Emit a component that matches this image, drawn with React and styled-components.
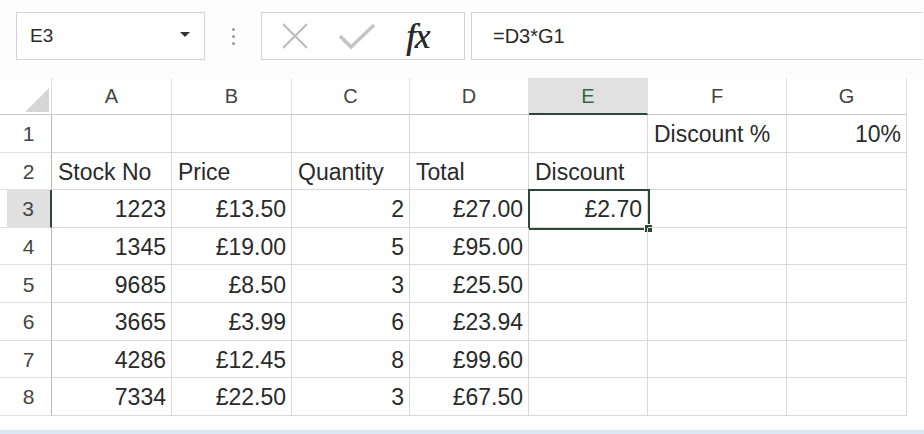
import { Fragment } from "react";
import styled, { createGlobalStyle } from "styled-components";

const GlobalStyle = createGlobalStyle`
  html, body {
    margin: 0;
    padding: 0;
    background: #ffffff;
  }
  body {
    font-family: "Liberation Sans", Arial, sans-serif;
    color: #2a2a2a;
  }
`;

const Page = styled.div`
  width: 924px;
  height: 434px;
  display: flex;
  flex-direction: column;
  background: #fff;
  overflow: hidden;
`;

const Toolbar = styled.div`
  height: 48px;
  padding: 12px 2px 18px 16px;
  display: flex;
  align-items: stretch;
  background: #fdfdfd;
`;

const NameBox = styled.div`
  width: 189px;
  box-sizing: border-box;
  border: 1px solid #d2d2d2;
  background: #fff;
  display: flex;
  align-items: center;
  justify-content: space-between;
  padding: 0 14px 0 13px;
  font-size: 19px;
  color: #2a2a2a;
`;

const Caret = styled.span`
  width: 0;
  height: 0;
  border-left: 5px solid transparent;
  border-right: 5px solid transparent;
  border-top: 5px solid #333;
  margin-top: -4px;
`;

const Grip = styled.div`
  width: 56px;
  display: flex;
  flex-direction: column;
  align-items: center;
  justify-content: center;
  gap: 4px;
  span {
    width: 3px;
    height: 3px;
    border-radius: 50%;
    background: #9a9a9a;
  }
`;

const ButtonGroup = styled.div`
  width: 204px;
  box-sizing: border-box;
  border: 1px solid #d2d2d2;
  background: #fff;
  display: flex;
  align-items: center;
  padding: 0 0 0 18px;
  gap: 28px;
`;

const Fx = styled.span`
  font-family: "Liberation Serif", "Times New Roman", serif;
  font-style: italic;
  font-size: 35px;
  color: #2a2a2a;
  letter-spacing: -1px;
  margin-left: 2px;
  line-height: 1;
  text-shadow: 0.4px 0 0 #2a2a2a;
`;

const FormulaBar = styled.div`
  flex: 1;
  margin-left: 6px;
  box-sizing: border-box;
  border: 1px solid #d2d2d2;
  border-right: none;
  background: #fff;
  display: flex;
  align-items: center;
  padding-left: 21px;
  font-size: 20px;
  color: #2a2a2a;
`;

const Sheet = styled.div`
  display: grid;
  grid-template-columns: 52px 120px 120px 118px 119px 119px 139px 120px 1fr;
  grid-template-rows: 37px repeat(8, 37.6px);
`;

const Corner = styled.div`
  position: relative;
  border-bottom: 1px solid #c9c9c9;
  border-right: 1px solid #dcdcdc;
  background: #fff;
  svg {
    position: absolute;
    right: 2px;
    bottom: 2px;
  }
`;

const ColHead = styled.div`
  display: flex;
  align-items: center;
  justify-content: center;
  font-size: 20px;
  color: ${(p) => (p.$active ? "#2f6a47" : "#444")};
  background: ${(p) => (p.$active ? "#e1e1e1" : "#fff")};
  border-right: 1px solid #e2e2e2;
  border-bottom: ${(p) => (p.$active ? "2px solid #2e4636" : "1px solid #c9c9c9")};
  box-sizing: border-box;
  padding-top: ${(p) => (p.$active ? "2px" : "0")};
`;

const RowHead = styled.div`
  display: flex;
  align-items: center;
  justify-content: center;
  padding: 2px 0 0 6px;
  font-size: 21px;
  color: #444;
  box-sizing: border-box;
  background: ${(p) => (p.$active ? "linear-gradient(to right, #fff 7px, #e0e0e0 7px)" : "#fff")};
  border-right: ${(p) => (p.$active ? "2px solid #2e4636" : "1px solid #b9b9b9")};
  border-bottom: 1px solid #e0e0e0;
`;

const Cell = styled.div`
  position: relative;
  display: flex;
  align-items: center;
  justify-content: ${(p) => (p.$right ? "flex-end" : "flex-start")};
  padding: 3px 5px 0 6px;
  font-size: 23px;
  color: #2a2a2a;
  white-space: nowrap;
  box-sizing: border-box;
  border-right: ${(p) => (p.$edge ? "none" : "1px solid #d9d9d9")};
  border-bottom: ${(p) => (p.$edge ? "none" : "1px solid #d9d9d9")};
`;

const Selection = styled.span`
  position: absolute;
  left: -1px;
  top: -1px;
  right: -3px;
  bottom: -3px;
  border: 2px solid #2e4636;
  pointer-events: none;
`;

const Handle = styled.span`
  position: absolute;
  right: -5px;
  bottom: -5px;
  width: 7px;
  height: 7px;
  background: #2e4636;
  border: 1px solid #fff;
`;

const Footer = styled.div`
  margin-top: auto;
  height: 4px;
  background: #dbe6f5;
`;

const columns = ["A", "B", "C", "D", "E", "F", "G"];

const rows = [
  ["", "", "", "", "", "Discount %", "10%"],
  ["Stock No", "Price", "Quantity", "Total", "Discount", "", ""],
  ["1223", "£13.50", "2", "£27.00", "£2.70", "", ""],
  ["1345", "£19.00", "5", "£95.00", "", "", ""],
  ["9685", "£8.50", "3", "£25.50", "", "", ""],
  ["3665", "£3.99", "6", "£23.94", "", "", ""],
  ["4286", "£12.45", "8", "£99.60", "", "", ""],
  ["7334", "£22.50", "3", "£67.50", "", "", ""],
];

const isRight = (value) => /^[£\d]/.test(value);

const CrossIcon = () => (
  <svg width="30" height="30" viewBox="0 0 30 30">
    <path d="M3 3 L27 27 M27 3 L3 27" stroke="#bdbdbd" strokeWidth="2.2" fill="none" />
  </svg>
);

const CheckIcon = () => (
  <svg width="38" height="30" viewBox="0 0 38 30">
    <path d="M2 15 L13 26 L36 4" stroke="#c4c4c4" strokeWidth="3.5" fill="none" />
  </svg>
);

export default function App() {
  return (
    <Page>
      <GlobalStyle />
      <Toolbar>
        <NameBox>
          E3
          <Caret />
        </NameBox>
        <Grip>
          <span />
          <span />
          <span />
        </Grip>
        <ButtonGroup>
          <CrossIcon />
          <CheckIcon />
          <Fx>fx</Fx>
        </ButtonGroup>
        <FormulaBar>=D3*G1</FormulaBar>
      </Toolbar>

      <Sheet>
        <Corner>
          <svg width="24" height="24" viewBox="0 0 24 24">
            <path d="M24 0 L24 24 L0 24 Z" fill="#d6d6d6" />
          </svg>
        </Corner>
        {columns.map((c) => (
          <ColHead key={c} $active={c === "E"}>
            {c}
          </ColHead>
        ))}
        <Cell $edge />

        {rows.map((row, r) => (
          <Fragment key={r}>
            <RowHead $active={r === 2}>{r + 1}</RowHead>
            {row.map((value, c) => (
              <Cell key={c} $right={isRight(value)}>
                {value}
                {r === 2 && c === 4 && (
                  <Selection>
                    <Handle />
                  </Selection>
                )}
              </Cell>
            ))}
            <Cell $edge />
          </Fragment>
        ))}
      </Sheet>
      <Footer />
    </Page>
  );
}
